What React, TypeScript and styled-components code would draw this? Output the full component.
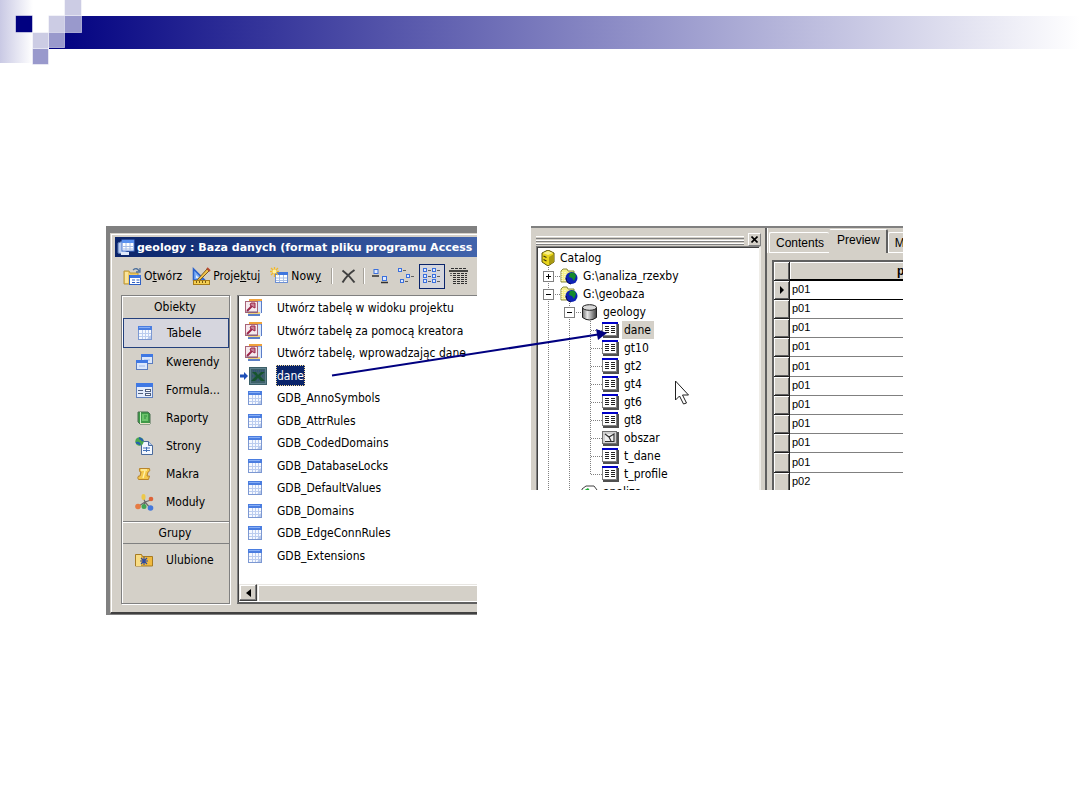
import React from "react";
import styled, { createGlobalStyle, css } from "styled-components";

const ui = `"DejaVu Sans Condensed", "DejaVu Sans", sans-serif`;
const face = "#d4d0c8";

const Global = createGlobalStyle`
  *, *::before, *::after { box-sizing: border-box; }
  body { margin: 0; background: #fff; color: #000; font-family: ${ui}; font-size: 12px; }
  button { font: inherit; color: inherit; background: none; border: 0; padding: 0; }
  ul, ol { list-style: none; margin: 0; padding: 0; }
  svg { display: block; flex: none; }
`;

/* ---------- slide ---------- */

const Banner = styled.header`
  display: flex;
  align-items: flex-start;
  height: 65px;
  background:
    linear-gradient(90deg, #c9c9e4, #fff) 0 0 / 33px 63px no-repeat,
    linear-gradient(90deg, #000080, #fff) 49px 16px / calc(100% - 49px) 33px no-repeat;
`;

const Stage = styled.main`
  position: relative;
  display: grid;
  grid-template-columns: minmax(0, 371fr) minmax(0, 372fr);
  column-gap: 54px;
  align-items: start;
  padding: 161px 177px 40px 106px;
`;

const Pointer = styled.svg`
  position: absolute;
  left: 328px;
  top: 260px;
  pointer-events: none;
`;

/* ---------- database window ---------- */

const Backdrop = styled.section`
  height: 389px;
  padding: 7px 0 0 4px;
  background: #808080;
  overflow: hidden;
`;

const Win = styled.div`
  display: flex;
  flex-direction: column;
  height: 381px;
  padding: 3px 0 0 4px;
  background: ${face};
  border: solid ${face};
  border-width: 1px 0 0 1px;
  border-bottom: 2px solid #404040;
  box-shadow: inset 1px 1px #fff;
`;

const TitleBar = styled.div`
  display: flex;
  align-items: center;
  gap: 2px;
  height: 20px;
  flex: none;
  padding-left: 2px;
  background: linear-gradient(90deg, #0a246a, #4264ac);
  color: #fff;
  white-space: nowrap;
  overflow: hidden;
`;

const TitleText = styled.h1`
  margin: 0;
  font-family: "DejaVu Sans", sans-serif;
  font-size: 11px;
`;

const Toolbar = styled.div`
  display: flex;
  align-items: center;
  height: 38px;
  flex: none;
  padding-left: 8px;
  overflow: hidden;
`;

const ToolButton = styled.button<{ $on?: boolean; $w?: number }>`
  display: flex;
  align-items: center;
  justify-content: ${(p) => (p.$w ? "center" : "flex-start")};
  gap: 2px;
  height: 25px;
  flex: none;
  width: ${(p) => (p.$w ? `${p.$w}px` : "auto")};
  margin-right: ${(p) => (p.$w ? 0 : 10)}px;
  white-space: nowrap;
  ${(p) => p.$on && css`border: 1px solid #0a246a; background: #d4d5dc;`}
`;

const Separator = styled.span`
  width: 2px;
  height: 16px;
  flex: none;
  border-left: 1px solid #a6a29a;
  border-right: 1px solid #fff;
`;

const Panes = styled.div`
  display: flex;
  gap: 7px;
  height: 309px;
  padding-left: 6px;
`;

const Sidebar = styled.nav`
  width: 109px;
  flex: none;
  border: 1px solid #808080;
  padding: 0 0 0 1px;
  box-shadow: 1px 1px #fff, inset 1px 1px #fff;
`;

const SideHead = styled.h2<{ $ruled?: boolean }>`
  margin: ${(p) => (p.$ruled ? "5px 0 2px" : "0")};
  height: ${(p) => (p.$ruled ? 23 : 22)}px;
  padding-right: 2px;
  line-height: 22px;
  font-size: 12px;
  font-weight: normal;
  text-align: center;
  ${(p) =>
    p.$ruled &&
    css`
      border-top: 1px solid #808080;
      border-bottom: 1px solid #808080;
      box-shadow: inset 0 1px #fff;
    `}
`;

const SideItem = styled.button<{ $on?: boolean }>`
  display: flex;
  align-items: center;
  gap: 11px;
  width: 100%;
  height: ${(p) => (p.$on ? 30 : 28)}px;
  padding-left: 10px;
  white-space: nowrap;
  ${(p) => p.$on && css`border: 1px solid #24407c; background: #d6d6de;`}
`;

const SideIcon = styled.span`
  display: flex;
  justify-content: center;
  width: 22px;
`;

const ObjectPane = styled.div`
  display: flex;
  flex-direction: column;
  flex: 1;
  min-width: 0;
  border: 1px solid #808080;
  border-right: 0;
  border-bottom: 2px solid #606060;
  box-shadow: inset 1px 0 #404040;
  background: #fff;
`;

const ObjectList = styled.ul`
  display: grid;
  grid-template-rows: repeat(12, 1fr);
  height: 270px;
  margin: 1px 0 17px;
  padding-left: 2px;
`;

const ObjectRow = styled.li`
  display: flex;
  align-items: center;
  white-space: nowrap;
`;

const ObjectIcon = styled.span<{ $inset: number }>`
  display: flex;
  width: 36px;
  padding-left: ${(p) => p.$inset}px;
`;

const ObjectName = styled.span<{ $on?: boolean }>`
  display: flex;
  align-items: center;
  height: 21px;
  padding: 0 1px;
  ${(p) => p.$on && css`background: #0a246a; color: #fff; outline: 1px dotted #f5db95; outline-offset: -1px;`}
`;

const ScrollBar = styled.div`
  display: flex;
  height: 17px;
  flex: none;
  padding-left: 1px;
`;

const ScrollButton = styled.button`
  display: grid;
  place-items: center;
  width: 18px;
  background: ${face};
  border: 1px solid #404040;
  border-top-color: #e8e6e2;
  border-left-color: #e8e6e2;
  box-shadow: inset -1px -1px #808080, inset 1px 1px #fff;
`;

const ScrollThumb = styled.div`
  flex: 1;
  background: ${face};
  border-top: 1px solid #e8e6e2;
  border-left: 1px solid #e8e6e2;
  box-shadow: inset 1px 1px #fff;
`;

/* ---------- catalog window ---------- */

const Catalog = styled.section`
  display: flex;
  height: 264px;
  background: ${face};
  border-top: 2px solid #808080;
  overflow: hidden;
`;

const TreeDock = styled.div`
  display: flex;
  flex-direction: column;
  width: 234px;
  flex: none;
  padding: 5px 4px 0 5px;
`;

const DockBar = styled.div`
  display: flex;
  align-items: center;
  gap: 4px;
  height: 14px;
`;

const Grip = styled.div`
  flex: 1;
  height: 8px;
  border: solid #fff;
  border-width: 1px 0;
  box-shadow: 0 1px #808080;
  background: linear-gradient(#d4d0c8 1px, #808080 1px 2px, #d4d0c8 2px 3px, #fff 3px 4px, #808080 4px 5px, #d4d0c8 5px);
`;

const CloseButton = styled.button`
  display: grid;
  place-items: center;
  width: 13px;
  height: 13px;
  border: 1px solid #808080;
  border-top-color: #fff;
  border-left-color: #fff;
`;

const Tree = styled.ul`
  flex: 1;
  border: solid #808080;
  border-width: 1px 0 0 1px;
  border-right: 2px solid #efede8;
  box-shadow: inset 1px 1px #404040;
  background: #fff;
  padding: 2px 0 0 2px;
`;

const TreeRow = styled.li`
  display: flex;
  align-items: center;
  height: 18px;
  white-space: nowrap;
`;

const RootIcon = styled.span`
  padding-left: 2px;
`;

const TreeLabel = styled.span<{ $on?: boolean }>`
  display: flex;
  align-items: center;
  height: 18px;
  margin-left: 3px;
  padding: 0 3px 0 2px;
  background: ${(p) => (p.$on ? face : "transparent")};
`;

const Preview = styled.div`
  display: flex;
  flex-direction: column;
  flex: 1;
  min-width: 0;
  border-left: 2px solid #606060;
  font-family: "Liberation Sans", Arial, sans-serif;
  overflow: hidden;
`;

const Tabs = styled.div`
  display: flex;
  align-items: flex-end;
  height: 25px;
  flex: none;
  padding-left: 1px;
  border-left: 1px solid #fff;
`;

const Tab = styled.button<{ $on?: boolean }>`
  height: ${(p) => (p.$on ? 24 : 21)}px;
  padding: ${(p) => (p.$on ? "0 6px 3px 7px" : "0 5px 0 6px")};
  flex: none;
  font-size: 12px;
  border: 1px solid #fff;
  border-width: 1px 0 ${(p) => (p.$on ? 0 : 1)}px 1px;
  ${(p) => p.$on && css`border-left-color: ${face}; border-right: 2px solid #606060;`}
  border-radius: 2px 2px 0 0;
`;

const Sheet = styled.div`
  flex: 1;
  margin: 7px 0 0 5px;
  border: 2px solid #606060;
  border-right: 0;
  background: #fff;
`;

const Grid = styled.table`
  width: 100%;
  border-collapse: separate;
  border-spacing: 0;
  table-layout: fixed;
  font-size: 11px;
`;

const GridRow = styled.tr`
  height: 19px;
  &:nth-child(5n) { height: 20px; }
`;

const Stub = styled.th`
  width: 16px;
  padding: 0;
  background: ${face};
  border: solid #202020;
  border-width: 0 1px 1px 0;
  box-shadow: inset 1px 1px #fff, inset -1px -1px #606060;
`;

const ColHead = styled.th`
  height: 19px;
  padding: 0 0 0 107px;
  text-align: left;
  font-size: 12px;
  background: ${face};
  border-bottom: 2px solid #000;
  box-shadow: inset 1px 1px #fff;
`;

const Cell = styled.td<{ $on?: boolean }>`
  padding: 0 0 2px 2px;
  border-bottom: 1px solid ${(p) => (p.$on ? "#000" : "#808080")};
`;

/* ---------- icons ---------- */

const TableIcon = () => (
  <svg width="14" height="14" viewBox="0 0 14 14">
    <rect width="14" height="14" fill="#7c98d2" />
    <rect x="1" y="3" width="12" height="10" fill="#f6f9ff" />
    <rect width="14" height="4" fill="#4a7de0" />
    <rect x="1" y="1" width="11" height="1" fill="#86aef6" />
    <path d="M1 7.500h12M1 10.500h12M4.500 4v9M7.500 4v9M10.500 4v9" stroke="#bccdef" />
    <path d="M9 13l4-4v4z" fill="#b7c9ec" />
  </svg>
);

const WizardIcon = () => (
  <svg width="19" height="18" viewBox="0 0 19 18">
    <rect x="5.500" y=".5" width="12" height="13" fill="#8eaee8" stroke="#5a7cc8" />
    <rect x="5" y="0" width="13" height="2" fill="#f0a23c" />
    <rect x="14" y="3" width="3" height="12" fill="#dce8fb" />
    <rect x="4" y="13" width="12" height="4" fill="#f3d27a" />
    <rect x="4" y="15" width="12" height="2" fill="#5c80c8" />
    <rect x="1.500" y="2.500" width="12" height="11" fill="#f5e9ee" stroke="#a86478" />
    <path d="M2 13h11" stroke="#7e5c78" />
    <path d="M3 12l5-5" stroke="#9c2448" strokeWidth="2" />
    <path d="M7 4h4v5L9 8 6 6z" fill="#c88498" stroke="#9c2448" />
  </svg>
);

const LinkedIcon = () => (
  <svg width="28" height="18" viewBox="0 0 28 18">
    <path d="M0 7.500h4V5l4 4-4 4v-2.500H0z" fill="#1d4fb8" />
    <rect x="9" width="18" height="18" fill="#3c6068" />
    <rect x="10.500" y="1.500" width="15" height="15" fill="none" stroke="#85a3b4" strokeDasharray="1 1" />
    <path d="M12 13h12M13 4h11M12 9h12" stroke="#2c3f86" strokeDasharray="1 1" />
    <path d="M12 5h4l2 3 3-3h4l-5 4 5 5h-4l-3-3-3 3h-4l5-5z" fill="#17542f" />
  </svg>
);

const DbIcon = () => (
  <svg width="18" height="18" viewBox="0 0 18 18">
    <path d="M1 5q4-3 8 0v10q-4 2-8 0z" fill="#b9cdf2" stroke="#5878b4" />
    <rect x="5" y="2" width="12" height="11" fill="#fff" stroke="#4b77d0" />
    <rect x="5" y="2" width="12" height="3" fill="#5b92f0" />
    <path d="M6 8.500h11M6 11h11M9 5v8M13 5v8" stroke="#a5bce8" />
    <rect x="4" y="14" width="8" height="3" fill="#dfe9fb" />
  </svg>
);

const OpenIcon = () => (
  <svg width="19" height="19" viewBox="0 0 19 19">
    <path d="M1 17V4h5l1 2h8v11z" fill="#f1cb62" stroke="#b8963c" />
    <path d="M2 16V5h3v11z" fill="#f9e49c" />
    <path d="M10 3q4-3 6 1M17 1v4h-4" fill="none" stroke="#4c6f9c" strokeWidth="1.300" />
    <rect x="6.500" y="8.500" width="11" height="9" fill="#fff" stroke="#2f60c4" />
    <rect x="7" y="8" width="11" height="3" fill="#3c74e0" />
    <path d="M9 13h3M13.500 13h3M9 15.500h3M13.500 15.500h3" stroke="#2f60c4" />
  </svg>
);

const DesignIcon = () => (
  <svg width="19" height="19" viewBox="0 0 19 19">
    <path d="M1.500 2v11h11z" fill="#7fb0f6" stroke="#2a62cc" strokeWidth="1.600" />
    <path d="M4 8v3h3z" fill="#e6f0ff" />
    <path d="M6 12L15 2l2 2-9 9-3 1z" fill="#efc14a" stroke="#7b5a20" />
    <path d="M15 1l3 3" stroke="#b84a30" strokeWidth="2" />
    <rect x="1.500" y="13.500" width="16" height="4" fill="#f4cf52" stroke="#a87c18" />
    <path d="M4.500 14v2M7.500 14v2M10.500 14v2M13.500 14v2" stroke="#7b5a10" />
  </svg>
);

const NewIcon = () => (
  <svg width="19" height="18" viewBox="0 0 19 18">
    <rect x="5.500" y="5.500" width="12" height="10" fill="#fff" stroke="#6c8fd4" />
    <rect x="5" y="5" width="13" height="3" fill="#3f76de" />
    <path d="M6 11h11M6 13.500h11M9.500 8v7M13.500 8v7" stroke="#a9bfe6" />
    <path d="M4.500 0v10M0 4.500h9M1 1l7 7M8 1L1 8" stroke="#f2b92c" strokeWidth="1.300" />
    <circle cx="4.500" cy="4.500" r="2" fill="#fff3a0" />
  </svg>
);

const DeleteIcon = () => (
  <svg width="15" height="15" viewBox="0 0 15 15">
    <path d="M1.500 1.500q7 5 12 12M13.500 1Q6 6 1.500 13.500" fill="none" stroke="#404040" strokeWidth="2" />
  </svg>
);

const Node = ({ x, y }: { x: number; y: number }) => (
  <>
    <rect x={x + 0.5} y={y + 0.5} width="3" height="3" fill="#dfeaff" stroke="#3b70dc" />
    <path d={`M${x + 5} ${y + 2.5}h3`} stroke="#606060" />
  </>
);

const LargeIcons = () => (
  <svg width="17" height="16" viewBox="0 0 17 16">
    <rect x="3" y="1.500" width="4" height="4" fill="#dfeaff" stroke="#3b70dc" />
    <path d="M1 8h7M10 14.500h7" stroke="#303030" strokeWidth="1.600" />
    <rect x="11.500" y="8.500" width="4" height="4" fill="#dfeaff" stroke="#3b70dc" />
  </svg>
);

const SmallIcons = () => (
  <svg width="17" height="16" viewBox="0 0 17 16">
    <Node x={0} y={0} /><Node x={8} y={6} /><Node x={2} y={11} />
  </svg>
);

const ListIcon = () => (
  <svg width="18" height="16" viewBox="0 0 18 16">
    {[0, 6, 11].map((y) => <React.Fragment key={y}><Node x={0} y={y} /><Node x={9} y={y} /></React.Fragment>)}
  </svg>
);

const DetailsIcon = () => (
  <svg width="19" height="16" viewBox="0 0 19 16">
    <path d="M2 .5h16" stroke="#303030" strokeDasharray="3 1" />
    <path d="M0 3h19" stroke="#202020" strokeWidth="1.600" />
    <path d="M4 5.500h14M4 7.500h14M4 9.500h14M4 11.500h14M4 13.500h14M4 15.500h14" stroke="#303030" strokeDasharray="3 1" />
    <path d="M1 5.500h2M1 7.500h2" stroke="#606060" />
  </svg>
);

const QueryIcon = () => (
  <svg width="17" height="17" viewBox="0 0 17 17">
    {[[5, 0], [0, 6]].map(([x, y]) => (
      <g key={x} transform={`translate(${x} ${y})`}>
        <rect x=".5" y=".5" width="11" height="9" fill="#dbe7fb" stroke="#5a7cc0" />
        <rect width="12" height="3" fill="#3f78e4" />
        <path d="M3 6h6" stroke="#9db8ec" />
      </g>
    ))}
  </svg>
);

const FormIcon = () => (
  <svg width="17" height="15" viewBox="0 0 17 15">
    <rect x=".5" y=".5" width="16" height="14" fill="#e4ecfb" stroke="#6081c0" />
    <rect width="17" height="4" fill="#3f78e4" />
    <path d="M2 7.500h5M2 10.500h5" stroke="#506080" />
    <rect x="9.500" y="6.500" width="5" height="2" fill="#fff" stroke="#506080" />
    <rect x="9.500" y="10.500" width="5" height="2" fill="#fff" stroke="#506080" />
  </svg>
);

const ReportIcon = () => (
  <svg width="14" height="14" viewBox="0 0 14 14">
    <path d="M1 1h10l2 2v10H3l-2-2z" fill="#3e9a48" stroke="#4a6e50" />
    <path d="M3.500 1v11" stroke="#c8ecc4" />
    <rect x="5" y="3" width="6" height="7" fill="#6cc46c" />
    <path d="M7 5h3M7 7h2" stroke="#2f8a3c" />
    <path d="M3 12.500h10" stroke="#e9e3c8" />
  </svg>
);

const PageIcon = () => (
  <svg width="18" height="18" viewBox="0 0 18 18">
    <path d="M6.500 4.500h7l4 4v9h-11z" fill="#f2f7ff" stroke="#4a6a9c" />
    <path d="M13.500 4.500v4h4" fill="#b8cdec" stroke="#4a6a9c" />
    <path d="M8 11h7M8 13.500h7M11.500 10v5" stroke="#4673b8" />
    <circle cx="4.500" cy="4.500" r="4.200" fill="#4aa84e" />
    <path d="M1 6q3-1 4 2M4 1q3 1 4 3" fill="none" stroke="#2560b0" strokeWidth="2" />
  </svg>
);

const MacroIcon = () => (
  <svg width="14" height="14" viewBox="0 0 14 14">
    <path d="M2.500 1.500h10q1 2-1 3.500H11l-1 4h2.500l-1 3.500h-10Q0 11 1.500 9H3l1-4H3q-1-2-.5-3.500z" fill="#f4c84a" stroke="#b8842c" />
    <path d="M4 3h6M8 4l-2 7" stroke="#fff0a8" strokeWidth="1.400" />
  </svg>
);

const ModuleIcon = () => (
  <svg width="19" height="17" viewBox="0 0 19 17">
    <path d="M8 3l2 5 5 6M10 8l-6 4M10 8l6-2M9 12l1-4" stroke="#686868" strokeWidth="1.200" fill="none" />
    <rect x="6.500" y="0" width="4" height="6" rx="2" fill="#ecc849" />
    <circle cx="16" cy="5" r="2.300" fill="#dd6338" />
    <circle cx="3" cy="12.500" r="2.800" fill="#e67b43" />
    <circle cx="9" cy="12.500" r="2.500" fill="#41a455" />
    <circle cx="15.500" cy="14" r="2.800" fill="#4478dc" />
  </svg>
);

const FavIcon = () => (
  <svg width="18" height="14" viewBox="0 0 18 14">
    <path d="M.5 13V1.500h6l1 2h10V13z" fill="#f0b93e" stroke="#a77b22" />
    <path d="M1 2h5v11H1z" fill="#f8dc84" />
    <path d="M9 4v8M5 8h8M6 5l6 6M12 5l-6 6" stroke="#2c4aa4" strokeWidth="1.100" />
  </svg>
);

const CatalogIcon = () => (
  <svg width="14" height="16" viewBox="0 0 14 16">
    <path d="M1 3l6-3 6 3v9l-6 4-6-4z" fill="#e9d51c" stroke="#5a5208" />
    <path d="M2 3l5-2 5 2-5 2z" fill="#f8f08c" />
    <path d="M8 7l5-3v8l-5 3z" fill="#a99a12" />
    <path d="M2.500 6l3 1.500M2.500 9.500l3 1.500" stroke="#40390a" strokeWidth="1.300" />
  </svg>
);

const FolderGlobe = () => (
  <svg width="18" height="17" viewBox="0 0 18 17">
    <path d="M1 14V3l2-2h4l1 2h6v11z" fill="#f6f08a" stroke="#8a8a40" />
    <path d="M2 13V4M5 13V3" stroke="#fff" strokeDasharray="1 1" />
    <circle cx="11.500" cy="10" r="6" fill="#0e22b4" />
    <path d="M10 5q5-2 6 3l-2 5-2-3-3-1z" fill="#148a2c" />
    <path d="M6 10q0 5 5 6" fill="none" stroke="#000050" />
  </svg>
);

const Cylinder = () => (
  <svg width="17" height="17" viewBox="0 0 17 17">
    <defs>
      <linearGradient id="cyl">
        <stop offset="0" stopColor="#707070" />
        <stop offset=".35" stopColor="#e8e8e8" />
        <stop offset="1" stopColor="#404040" />
      </linearGradient>
    </defs>
    <path d="M1.500 3.500v10q7 5 14 0v-10z" fill="url(#cyl)" stroke="#202020" />
    <ellipse cx="8.500" cy="3.500" rx="7" ry="2.800" fill="#d8d8d8" stroke="#202020" />
  </svg>
);

const GeoTable = () => (
  <svg width="17" height="16" viewBox="0 0 17 16">
    <rect x="1" y="2" width="16" height="14" fill="#505050" />
    <rect x=".5" y="1.500" width="14" height="12" fill="#fff" stroke="#808080" />
    <rect width="16" height="2" fill="#0000c8" />
    <path d="M3 4.500h4M3 6.500h4M3 8.500h4M3 10.500h4M9 4.500h4M9 6.500h4M9 8.500h4M9 10.500h4" stroke="#202020" />
  </svg>
);

const Polygon = () => (
  <svg width="17" height="15" viewBox="0 0 17 15">
    <rect x="1" y="1" width="16" height="14" fill="#505050" />
    <rect x=".5" y=".5" width="14" height="12" fill="#d0d0d0" stroke="#707070" />
    <rect x="3" y="3" width="10" height="8" fill="#f0f0f0" />
    <path d="M3 3l4 3 5-3v7.500H3M7 6l2 4" fill="none" stroke="#303030" strokeWidth="1.200" />
  </svg>
);

const Coverage = () => (
  <svg width="17" height="16" viewBox="0 0 17 16">
    <path d="M1 5l4-3h8l3 4v10H1z" fill="#fff" stroke="#404040" />
    <path d="M2 7l5-3 3 4-4 5z" fill="#18b030" />
  </svg>
);

type GuideKind = "line" | "tee" | "end" | "plus" | "minus";

const Guide = ({ kind }: { kind: GuideKind }) => {
  const box = kind === "plus" || kind === "minus";
  return (
    <svg width="21" height="18" viewBox="0 0 21 18" shapeRendering="crispEdges">
      <path d={kind === "end" ? "M9.500 0v9" : "M9.500 0v18"} stroke="#808080" strokeDasharray="1 1" />
      {kind !== "line" && <path d="M10 9.500h11" stroke="#808080" strokeDasharray="1 1" />}
      {box && (
        <>
          <rect x="4.500" y="4.500" width="10" height="10" fill="#fff" stroke="#808080" />
          <path d={kind === "plus" ? "M7 9.500h5M9.500 7v5" : "M7 9.500h5"} stroke="#000" />
        </>
      )}
    </svg>
  );
};

/* ---------- data ---------- */

const sections = [
  { name: "Tabele", icon: <TableIcon /> },
  { name: "Kwerendy", icon: <QueryIcon /> },
  { name: "Formula...", icon: <FormIcon /> },
  { name: "Raporty", icon: <ReportIcon /> },
  { name: "Strony", icon: <PageIcon /> },
  { name: "Makra", icon: <MacroIcon /> },
  { name: "Moduły", icon: <ModuleIcon /> },
];

const wizards = [
  "Utwórz tabelę w widoku projektu",
  "Utwórz tabelę za pomocą kreatora",
  "Utwórz tabelę, wprowadzając dane",
];

const tables = [
  "GDB_AnnoSymbols",
  "GDB_AttrRules",
  "GDB_CodedDomains",
  "GDB_DatabaseLocks",
  "GDB_DefaultValues",
  "GDB_Domains",
  "GDB_EdgeConnRules",
  "GDB_Extensions",
];

const layer = (name: string, last = false) => ({
  name,
  guides: ["line", "line", last ? "end" : "tee"] as GuideKind[],
  icon: name === "obszar" ? <Polygon /> : <GeoTable />,
});

const tree: { name: string; guides: GuideKind[]; icon: React.ReactNode }[] = [
  { name: "G:\\analiza_rzexby", guides: ["plus"], icon: <FolderGlobe /> },
  { name: "G:\\geobaza", guides: ["minus"], icon: <FolderGlobe /> },
  { name: "geology", guides: ["line", "minus"], icon: <Cylinder /> },
  ...["dane", "gt10", "gt2", "gt4", "gt6", "gt8", "obszar", "t_dane"].map((n) => layer(n)),
  layer("t_profile", true),
  { name: "analiza", guides: ["line", "line"], icon: <Coverage /> },
];

const values = [...Array(10).fill("p01"), "p02"];

export default function App() {
  return (
    <>
      <Global />
      <Banner>
        <svg width="82" height="65" viewBox="0 0 82 65">
          <rect x="33" width="32" height="16" fill="#fff" />
          <rect x="33" y="16" width="15" height="16" fill="#fff" />
          <g stroke="#fff" strokeOpacity=".5">
            <rect x="15.500" y="15.500" width="17" height="17" fill="#000080" />
            <rect x="64.500" y="-1.500" width="17" height="17" fill="#cccce4" />
            <rect x="48.500" y="15.500" width="16" height="17" fill="#cccce4" />
            <rect x="32.500" y="32.500" width="16" height="16" fill="#cccce4" />
            <rect x="64.500" y="15.500" width="17" height="17" fill="#9999cc" />
            <rect x="48.500" y="32.500" width="16" height="15" fill="#9999cc" />
            <rect x="32.500" y="48.500" width="16" height="16" fill="#9999cc" />
          </g>
        </svg>
      </Banner>
      <Stage>
        <Backdrop>
          <Win>
            <TitleBar>
              <DbIcon />
              <TitleText>geology : Baza danych (format pliku programu Access</TitleText>
            </TitleBar>
            <Toolbar>
              <ToolButton><OpenIcon /><span>O<u>t</u>wórz</span></ToolButton>
              <ToolButton><DesignIcon /><span>Proje<u>k</u>tuj</span></ToolButton>
              <ToolButton><NewIcon /><span>Now<u>y</u></span></ToolButton>
              <Separator />
              <ToolButton $w={30} aria-label="Usuń"><DeleteIcon /></ToolButton>
              <Separator />
              <ToolButton $w={28} aria-label="Duże ikony"><LargeIcons /></ToolButton>
              <ToolButton $w={26} aria-label="Małe ikony"><SmallIcons /></ToolButton>
              <ToolButton $w={26} $on aria-label="Lista"><ListIcon /></ToolButton>
              <ToolButton $w={26} aria-label="Szczegóły"><DetailsIcon /></ToolButton>
            </Toolbar>
            <Panes>
              <Sidebar>
                <SideHead>Obiekty</SideHead>
                {sections.map((s, i) => (
                  <SideItem key={s.name} $on={i === 0}><SideIcon>{s.icon}</SideIcon>{s.name}</SideItem>
                ))}
                <SideHead $ruled>Grupy</SideHead>
                <SideItem><SideIcon><FavIcon /></SideIcon>Ulubione</SideItem>
              </Sidebar>
              <ObjectPane>
                <ObjectList>
                  {wizards.map((w) => (
                    <ObjectRow key={w}><ObjectIcon $inset={4}><WizardIcon /></ObjectIcon><ObjectName>{w}</ObjectName></ObjectRow>
                  ))}
                  <ObjectRow><ObjectIcon $inset={0}><LinkedIcon /></ObjectIcon><ObjectName $on>dane</ObjectName></ObjectRow>
                  {tables.map((t) => (
                    <ObjectRow key={t}><ObjectIcon $inset={8}><TableIcon /></ObjectIcon><ObjectName>{t}</ObjectName></ObjectRow>
                  ))}
                </ObjectList>
                <ScrollBar>
                  <ScrollButton aria-label="Przewiń w lewo">
                    <svg width="5" height="8" viewBox="0 0 5 8"><path d="M5 0v8L0 4z" /></svg>
                  </ScrollButton>
                  <ScrollThumb />
                </ScrollBar>
              </ObjectPane>
            </Panes>
          </Win>
        </Backdrop>

        <Catalog>
          <TreeDock>
            <DockBar>
              <Grip />
              <CloseButton aria-label="Close">
                <svg width="7" height="7" viewBox="0 0 7 7"><path d="M.5.5l6 6M6.500.5l-6 6" stroke="#000" strokeWidth="1.600" /></svg>
              </CloseButton>
            </DockBar>
            <Tree>
              <TreeRow>
                <RootIcon><CatalogIcon /></RootIcon>
                <TreeLabel>Catalog</TreeLabel>
              </TreeRow>
              {tree.map((n) => (
                <TreeRow key={n.name}>
                  {n.guides.map((g, i) => <Guide key={i} kind={g} />)}
                  {n.icon}
                  <TreeLabel $on={n.name === "dane"}>{n.name}</TreeLabel>
                </TreeRow>
              ))}
            </Tree>
          </TreeDock>
          <Preview>
            <Tabs role="tablist">
              <Tab role="tab">Contents</Tab>
              <Tab role="tab" $on aria-selected>Preview</Tab>
              <Tab role="tab">Metadata</Tab>
            </Tabs>
            <Sheet>
              <Grid>
                <thead>
                  <tr><Stub /><ColHead scope="col">profil</ColHead></tr>
                </thead>
                <tbody>
                  {values.map((v, i) => (
                    <GridRow key={i}>
                      <Stub scope="row">
                        {i === 0 && (
                          <svg width="15" height="8" viewBox="0 0 15 8" aria-label="current row"><path d="M6 0v8l4-4z" /></svg>
                        )}
                      </Stub>
                      <Cell $on={i === 0}>{v}</Cell>
                    </GridRow>
                  ))}
                </tbody>
              </Grid>
            </Sheet>
          </Preview>
        </Catalog>

        <Pointer width="370" height="90" viewBox="328 325 370 90" aria-hidden="true">
          <path d="M332 375.500L598 334.500" stroke="#000080" strokeWidth="2" />
          <path d="M596 329l11 4-9 7z" fill="#000080" />
          <path d="M675.500 381v19l4-4 4 8 3-1-4-8h6z" fill="#fff" stroke="#202020" />
        </Pointer>
      </Stage>
    </>
  );
}
